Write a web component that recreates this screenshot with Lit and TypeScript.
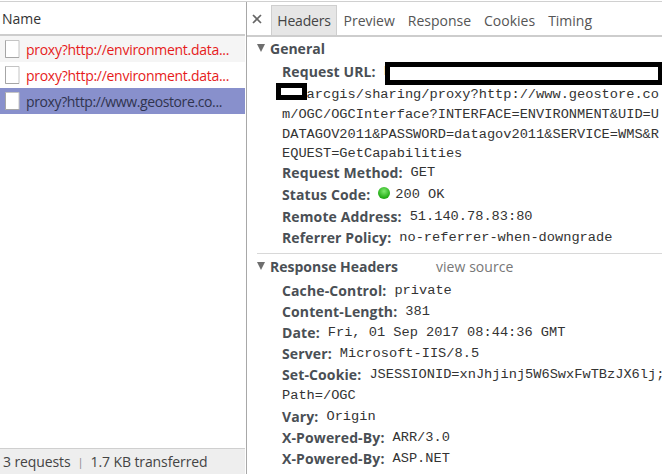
import { LitElement, html, css } from "lit";
import { customElement } from "lit/decorators.js";

const fileIcon = html`<svg class="ficon" width="15" height="20" viewBox="0 0 15 20"><path d="M.5 1.5H14V18.5H.5Z" fill="#fff" stroke="#c4c4c4"/><path d="M.5 1.5V18.5H14" fill="none" stroke="#a6a6a6"/></svg>`;

@customElement("app-root")
export class AppRoot extends LitElement {
  static styles = css`
    :host { display: block; width: 662px; height: 474px; overflow: hidden; background: #fff; font-family: "Open Sans", "Noto Sans", sans-serif; font-size: 14px; color: #303942; }
    .root { display: grid; grid-template-columns: 246px 1px 1fr; height: 473px; margin-top: 1px; border-top: 1px solid #d0d0d0; box-sizing: border-box; }
    .left { display: flex; flex-direction: column; min-width: 0; }
    .name { display: flex; align-items: center; padding-left: 2px; border-bottom: 2px solid #cdcdcd; box-sizing: border-box; height: 34px; margin-right: 1px; font-size: 14px; color: #333; flex: none; }
    .rows { flex: 1; display: flex; flex-direction: column; margin-right: 1px; }
    .row { height: 26px; display: flex; align-items: center; padding-left: 5px; gap: 6px; font-size: 14px; letter-spacing: -0.28px; color: #e61c1c; white-space: nowrap; }
    .row.odd { background: #f5f5f5; }
    .row.sel { background: #8890cc; color: #30344f; letter-spacing: -0.38px; }
    .ficon { flex: none; }
    .status { flex: none; height: 26px; margin-right: 1px; background: #eeeeee; border-top: 1px solid #cfcfcf; display: flex; align-items: center; gap: 7px; padding-left: 3px; font-size: 14px; letter-spacing: -0.1px; color: #444; box-sizing: border-box; }
    .sep { font-size: 11px; color: #888; }
    .divider { background: #a8a8a8; }
    .right { position: relative; min-width: 0; overflow: hidden; }
    .tabs { display: flex; align-items: flex-end; border-bottom: 2px solid #cdcdcd; box-sizing: border-box; height: 35px; }
    .close { width: 19px; padding-left: 5px; align-self: center; display: flex; flex: none; }
    .tab { height: 30px; padding: 0 6.5px; display: flex; align-items: center; font-size: 14px; color: #555; box-sizing: border-box; }
    .tab.on { background: #e6e6e6; border: 1px solid #cfcfcf; border-bottom: none; color: #444; padding: 0; width: 66px; justify-content: center; letter-spacing: -0.2px; }
    .body { padding: 1px 0 0 10px; }
    .sec { display: flex; align-items: center; gap: 5px; height: 20px; margin-bottom: 3px; font-weight: 700; font-size: 14px; color: #4a4f55; }
    .tri { width: 0; height: 0; border-left: 4.5px solid transparent; border-right: 4.5px solid transparent; border-top: 8px solid #6e6e6e; flex: none; }
    .line { margin-left: 25px; height: 21px; display: flex; align-items: center; white-space: nowrap; }
    .line.up { margin-top: -2px; }
    .line.gap { margin-top: 1px; }
    .k { font-weight: 700; font-size: 14px; letter-spacing: 0.12px; color: #4a4f55; margin-right: 8px; }
    .v, .url { font-family: "Liberation Mono", "DejaVu Sans Mono", monospace; font-size: 13.67px; color: #333; }
    .url { margin-left: 25px; line-height: 19.8px; height: 19.8px; white-space: pre; }
    .url.first { margin-top: 3px; }
    .dot { width: 12px; height: 12px; border-radius: 50%; background: radial-gradient(circle at 50% 35%, #7eea6e, #1faa12 70%); margin-right: 5px; margin-top: -4px; flex: none; }
    .hr { height: 1px; background: #d8d8d8; margin-top: 5px; }
    .sec.resp { margin-top: 2px; margin-bottom: 4px; }
    .src { font-weight: 400; color: #777; margin-left: 33px; letter-spacing: 0.06px; }
    .redact { position: absolute; box-sizing: border-box; border: 5px solid #000; background: #fff; }
    .r1 { left: 138px; top: 60px; width: 278px; height: 23px; }
    .r2 { left: 29px; top: 81px; width: 31px; height: 17px; }
  `;

  render() {
    const kv = (k: string, v: string) => html`<div class="line"><span class="k">${k}:</span><span class="v">${v}</span></div>`;
    return html`<div class="root">
      <div class="left">
        <div class="name">Name</div>
        <div class="rows">
          <div class="row odd">${fileIcon}<span>proxy?http://environment.data...</span></div>
          <div class="row">${fileIcon}<span>proxy?http://environment.data...</span></div>
          <div class="row sel">${fileIcon}<span>proxy?http://www.geostore.co...</span></div>
        </div>
        <div class="status"><span>3 requests</span><span class="sep">|</span><span>1.7 KB transferred</span></div>
      </div>
      <div class="divider"></div>
      <div class="right">
        <div class="tabs">
          <div class="close"><svg width="10" height="10" viewBox="0 0 10 10"><path d="M1 1 9 9M9 1 1 9" stroke="#666" stroke-width="1.7"/></svg></div>
          <div class="tab on">Headers</div><div class="tab">Preview</div><div class="tab">Response</div><div class="tab">Cookies</div><div class="tab">Timing</div>
        </div>
        <div class="body">
          <div class="sec"><span class="tri"></span>General</div>
          <div class="line"><span class="k">Request URL:</span><span class="v">h</span></div>
          <div class="url first">   arcgis/sharing/proxy?http://www.geostore.co</div>
          <div class="url">m/OGC/OGCInterface?INTERFACE=ENVIRONMENT&amp;UID=U</div>
          <div class="url">DATAGOV2011&amp;PASSWORD=datagov2011&amp;SERVICE=WMS&amp;R</div>
          <div class="url">EQUEST=GetCapabilities</div>
          <div class="line up"><span class="k">Request Method:</span><span class="v">GET</span></div>
          <div class="line gap"><span class="k">Status Code:</span><span class="dot"></span><span class="v">200 OK</span></div>
          <div class="line gap"><span class="k">Remote Address:</span><span class="v">51.140.78.83:80</span></div>
          ${kv("Referrer Policy", "no-referrer-when-downgrade")}
          <div class="hr"></div>
          <div class="sec resp"><span class="tri"></span>Response Headers<span class="src">view source</span></div>
          ${kv("Cache-Control", "private")}
          ${kv("Content-Length", "381")}
          ${kv("Date", "Fri, 01 Sep 2017 08:44:36 GMT")}
          ${kv("Server", "Microsoft-IIS/8.5")}
          ${kv("Set-Cookie", "JSESSIONID=xnJhjinj5W6SwxFwTBzJX6lj;")}
          <div class="line"><span class="v">Path=/OGC</span></div>
          ${kv("Vary", "Origin")}
          ${kv("X-Powered-By", "ARR/3.0")}
          ${kv("X-Powered-By", "ASP.NET")}
        </div>
        <div class="redact r1"></div>
        <div class="redact r2"></div>
      </div>
    </div>`;
  }
}
